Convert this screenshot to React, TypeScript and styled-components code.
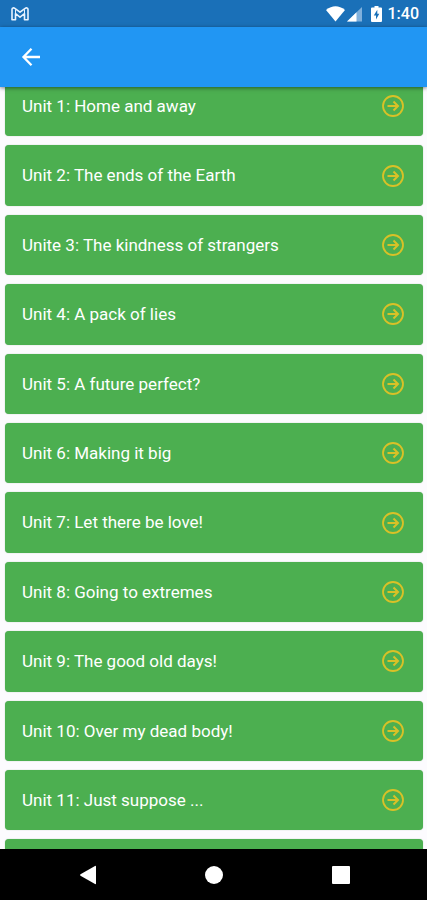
import React, { useLayoutEffect, useRef } from "react";
import styled, { createGlobalStyle } from "styled-components";

const GlobalStyle = createGlobalStyle`
  *, *::before, *::after { box-sizing: border-box; }
  body {
    margin: 0;
    background: #fcfbfe;
    font-family: Roboto, "Liberation Sans", sans-serif;
  }
  button { font: inherit; border: 0; padding: 0; cursor: pointer; }
  svg { display: block; }
`;

const Screen = styled.div`
  display: flex;
  flex-direction: column;
  height: 100vh;
  overflow: hidden;
`;

const StatusBar = styled.div`
  flex: none;
  display: flex;
  align-items: center;
  justify-content: space-between;
  height: 27px;
  padding: 0 8px 0 11px;
  background: #1a70b8;
  color: #fff;
`;

const StatusIcons = styled.div`
  display: flex;
  align-items: center;
`;

const Clock = styled.span`
  margin-left: 6px;
  font-size: 16px;
  font-weight: 500;
  line-height: 28px;
`;

const AppBar = styled.header`
  flex: none;
  display: flex;
  align-items: center;
  height: 60px;
  padding: 0 18px;
  background: #2196f3;
  box-shadow: 0 1px 4px rgba(0, 0, 0, 0.5);
  z-index: 1;
`;

const IconButton = styled.button`
  background: none;
  color: #fff;
`;

const Scroller = styled.main`
  flex: 1;
  min-height: 0;
  overflow-y: auto;
  scrollbar-width: none;
`;

const UnitList = styled.ul`
  display: flex;
  flex-direction: column;
  gap: 9px;
  margin: 0;
  padding: 8px 4px 8px 5px;
  list-style: none;
`;

const UnitCard = styled.button`
  display: flex;
  align-items: center;
  justify-content: space-between;
  width: 100%;
  min-height: 60px;
  padding: 20px 18px 20px 17px;
  border-radius: 4px;
  background: #4caf50;
  box-shadow: 0 0 1px rgba(40, 110, 44, 0.5);
  color: #fff;
  font-size: 17px;
  line-height: 1.2;
  text-align: left;
`;

const UnitArrow = styled.svg`
  flex: none;
  width: 24px;
  height: 24px;
  margin: -2px 0;
  color: #d9c127;
`;

const NavBar = styled.nav`
  flex: none;
  display: grid;
  grid-template-columns: repeat(3, 1fr);
  height: 51px;
  padding: 0 23px 0 25px;
  background: #000;
`;

const NavButton = styled.button`
  display: flex;
  align-items: center;
  justify-content: center;
  background: none;
  color: #fff;
`;

const units = [
  "Unit 1: Home and away",
  "Unit 2: The ends of the Earth",
  "Unite 3: The kindness of strangers",
  "Unit 4: A pack of lies",
  "Unit 5: A future perfect?",
  "Unit 6: Making it big",
  "Unit 7: Let there be love!",
  "Unit 8: Going to extremes",
  "Unit 9: The good old days!",
  "Unit 10: Over my dead body!",
  "Unit 11: Just suppose ...",
];

const INITIAL_SCROLL = 19;

export default function App() {
  const scroller = useRef<HTMLElement>(null);

  useLayoutEffect(() => {
    if (scroller.current) scroller.current.scrollTop = INITIAL_SCROLL;
  }, []);

  return (
    <>
      <GlobalStyle />
      <Screen>
        <StatusBar>
          <svg width="18" height="14" viewBox="0 0 18 14" fill="none" stroke="#e8f3ff" strokeWidth="1.6" strokeLinejoin="round" aria-label="Mail">
            <path d="M1 12.8V2.4C1 .8 2.7.5 3.8 1.3L9 5.2l5.200-3.900C15.300.5 17 .8 17 2.400v10.400h-3.500V6.700L9 10.100 4.500 6.700v6.100z" />
            <path d="M4.500 6.700V2.500M13.500 6.700V2.500" strokeWidth="1" />
          </svg>
          <StatusIcons>
            <svg width="50" height="18" viewBox="0 0 50 18" aria-label="Wi-Fi and mobile signal">
              <path d="M5 5Q14.500-2.500 24 5L14.500 16.500z" fill="#fff" />
              <path d="M26 16.500L41 2v14.500z" fill="#7fb0dc" />
              <path d="M26 16.500L35.500 7.300v9.200z" fill="#fff" />
            </svg>
            <svg width="11" height="16" viewBox="0 0 11 16" aria-label="Battery charging">
              <path d="M3.500 0h4v1.500H10q1 0 1 1V15q0 1-1 1H1q-1 0-1-1V2.500q0-1 1-1h2.500z" fill="#fff" />
              <path d="M6.300 3.800L2.800 9.500H5v4l3.300-5.700H6.300z" fill="#1a70b8" />
            </svg>
            <Clock>1:40</Clock>
          </StatusIcons>
        </StatusBar>

        <AppBar>
          <IconButton aria-label="Back">
            <svg width="26" height="26" viewBox="0 0 26 26" fill="none" stroke="currentColor" strokeWidth="2.300">
              <path d="M22 13H6M13.500 4.800L5.500 13l8 8.200" />
            </svg>
          </IconButton>
        </AppBar>

        <Scroller ref={scroller}>
          <UnitList>
            {units.map((title) => (
              <li key={title}>
                <UnitCard>
                  {title}
                  <UnitArrow viewBox="0 0 24 24" fill="none" stroke="currentColor" aria-hidden="true">
                    <circle cx="12" cy="12" r="10" strokeWidth="1.800" />
                    <path d="M6.500 12h10M12.500 7.500L17 12l-4.500 4.500" strokeWidth="2" />
                  </UnitArrow>
                </UnitCard>
              </li>
            ))}
            <li>
              <UnitCard aria-label="More units" />
            </li>
          </UnitList>
        </Scroller>

        <NavBar>
          <NavButton aria-label="Back">
            <svg width="18" height="20" viewBox="0 0 18 20" fill="currentColor">
              <path d="M1.500 9.300Q.5 10 1.500 10.700L16 19q1 .5 1-.5v-17q0-1-1-.5z" />
            </svg>
          </NavButton>
          <NavButton aria-label="Home">
            <svg width="18" height="18" viewBox="0 0 18 18" fill="currentColor">
              <circle cx="9" cy="9" r="9" />
            </svg>
          </NavButton>
          <NavButton aria-label="Recent apps">
            <svg width="18" height="18" viewBox="0 0 18 18" fill="currentColor">
              <rect width="18" height="18" rx="1" />
            </svg>
          </NavButton>
        </NavBar>
      </Screen>
    </>
  );
}
